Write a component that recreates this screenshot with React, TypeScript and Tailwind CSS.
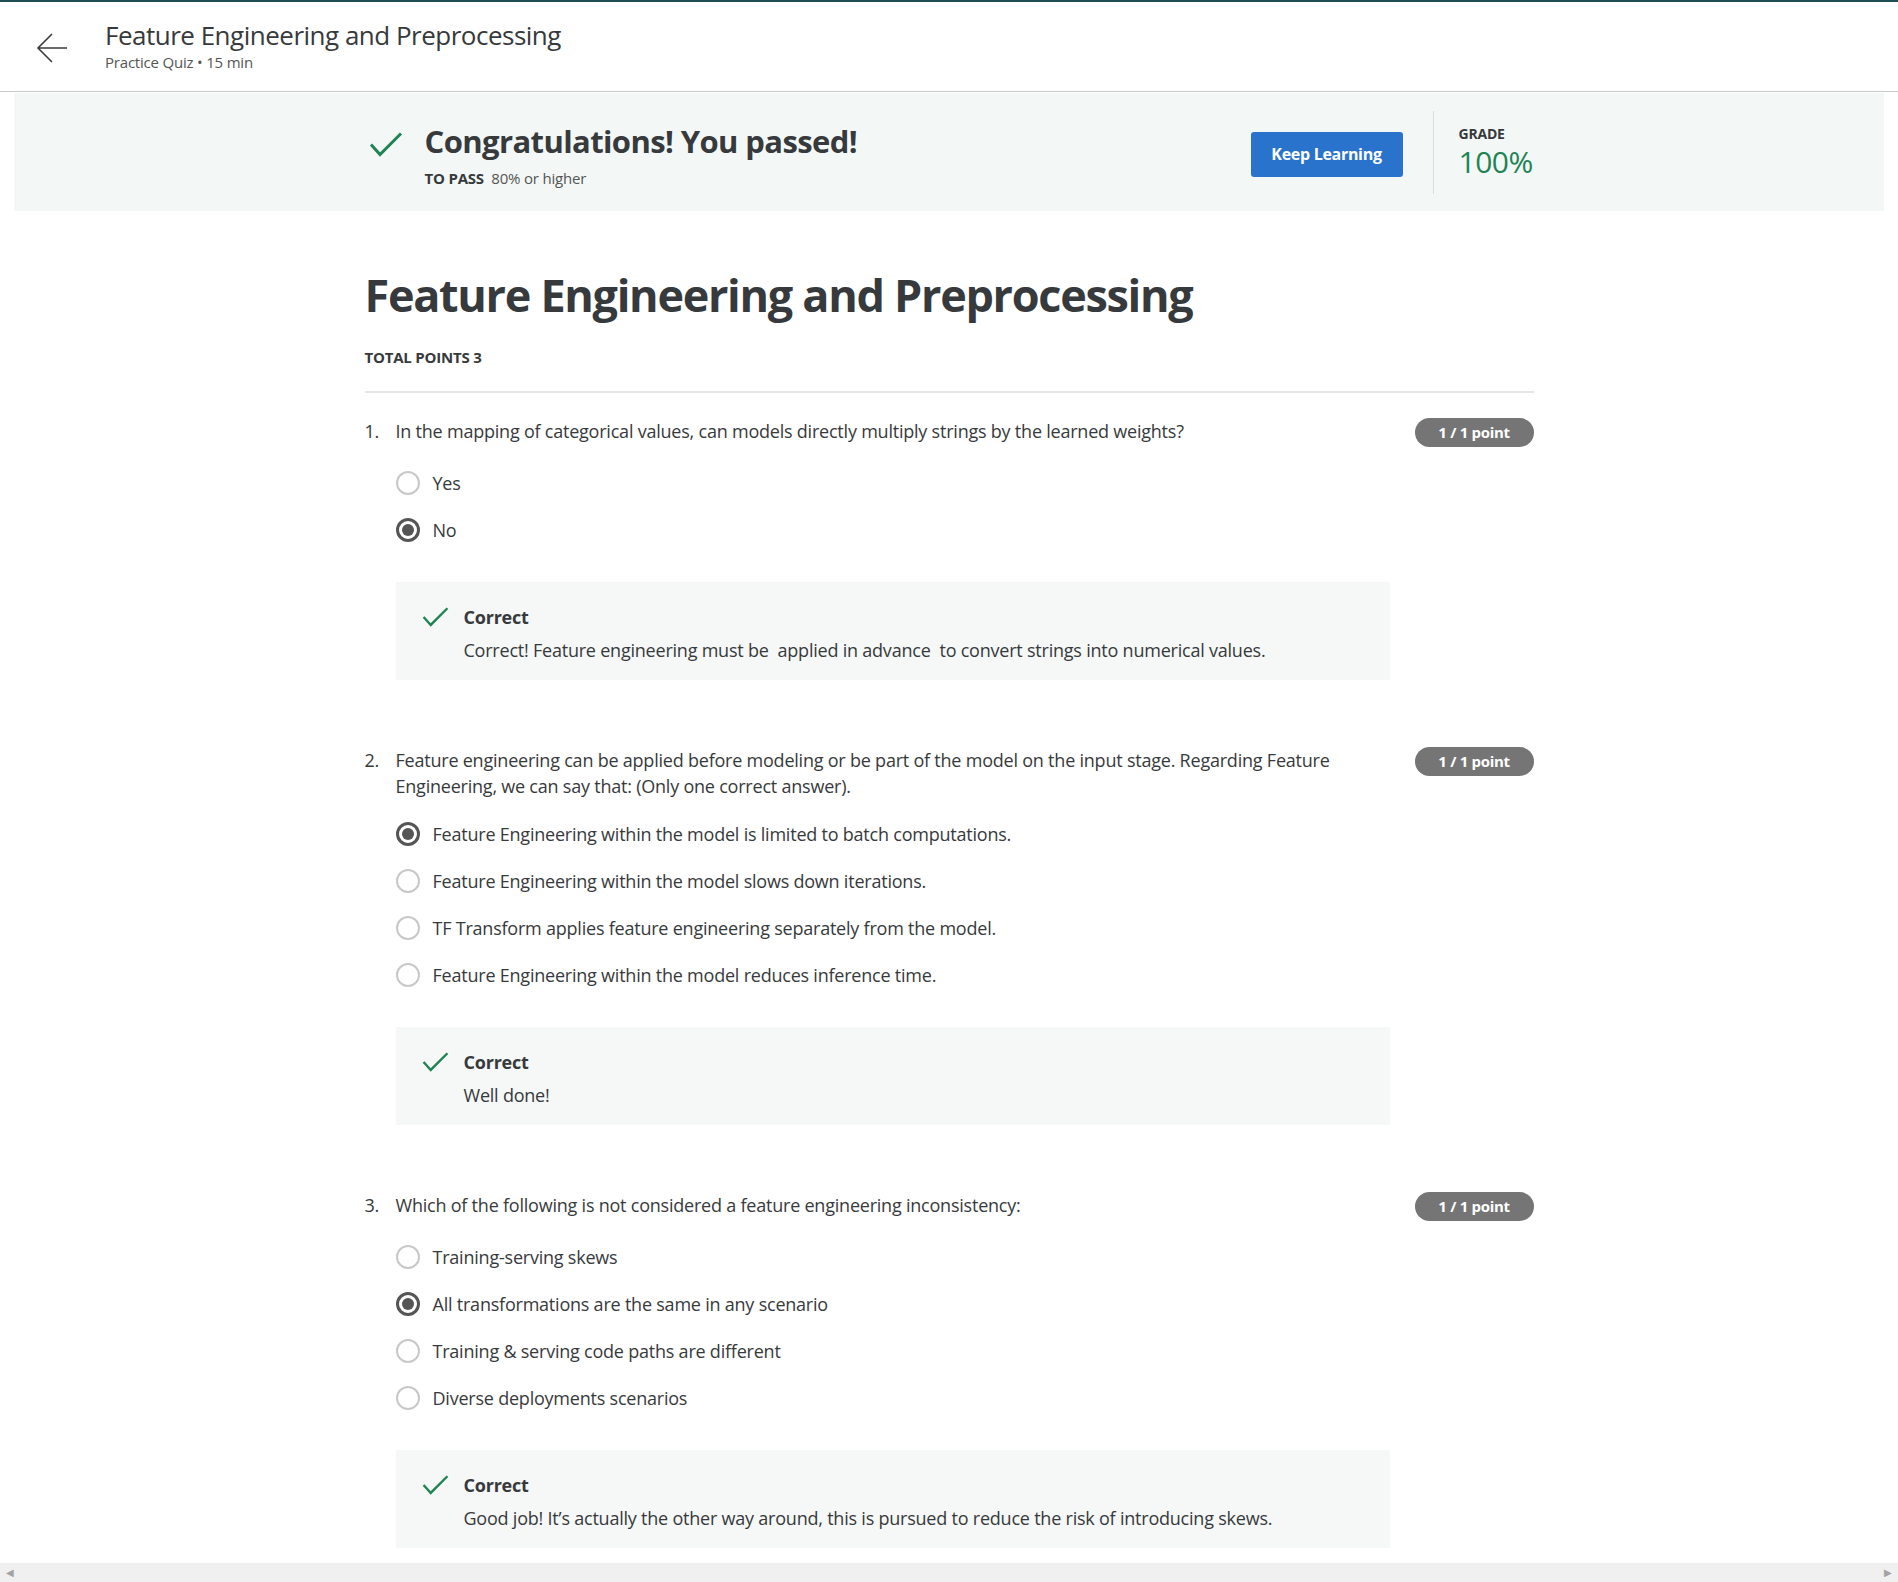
import type { ReactNode } from "react";

const font = { fontFamily: '"Open Sans", "Liberation Sans", sans-serif' };

type Question = {
  n: number;
  text: ReactNode;
  options: string[];
  picked: number;
  feedback: string;
};

const questions: Question[] = [
  {
    n: 1,
    text: "In the mapping of categorical values, can models directly multiply strings by the learned weights?",
    options: ["Yes", "No"],
    picked: 1,
    feedback: "Correct! Feature engineering must be  applied in advance  to convert strings into numerical values.",
  },
  {
    n: 2,
    text: "Feature engineering can be applied before modeling or be part of the model on the input stage. Regarding Feature Engineering, we can say that: (Only one correct answer).",
    options: [
      "Feature Engineering within the model is limited to batch computations.",
      "Feature Engineering within the model slows down iterations.",
      "TF Transform applies feature engineering separately from the model.",
      "Feature Engineering within the model reduces inference time.",
    ],
    picked: 0,
    feedback: "Well done!",
  },
  {
    n: 3,
    text: "Which of the following is not considered a feature engineering inconsistency:",
    options: [
      "Training-serving skews",
      "All transformations are the same in any scenario",
      "Training & serving code paths are different",
      "Diverse deployments scenarios",
    ],
    picked: 1,
    feedback: "Good job! It\u2019s actually the other way around, this is pursued to reduce the risk of introducing skews.",
  },
];

function Check({ className }: { className?: string }) {
  return (
    <svg viewBox="0 0 34 26" className={className} fill="none">
      <polyline points="2,13 11,23 32,2" stroke="#1f8354" strokeWidth="3" />
    </svg>
  );
}

function Radio({ on }: { on: boolean }) {
  if (on) {
    return (
      <span className="flex h-[24px] w-[24px] shrink-0 items-center justify-center rounded-full border-[3px] border-[#555]">
        <span className="h-[12px] w-[12px] rounded-full bg-[#555]" />
      </span>
    );
  }
  return <span className="h-[24px] w-[24px] shrink-0 rounded-full border-2 border-[#c8c8c8]" />;
}

function QuestionBlock({ q }: { q: Question }) {
  return (
    <div className="flex text-[18px] tracking-[-0.22px] text-[#373a3c]">
      <div className="w-[31px] shrink-0 leading-[26px]">{q.n}.</div>
      <div className="w-[994px] shrink-0">
        <p className="min-h-[30px] leading-[26px]">{q.text}</p>
        <div className="mt-[23px] flex flex-col gap-[23px]">
          {q.options.map((o, i) => (
            <label key={o} className="flex items-center gap-[13px] leading-[24px]">
              <Radio on={i === q.picked} />
              <span>{o}</span>
            </label>
          ))}
        </div>
        <div className="mt-[40px] flex h-[98px] gap-[15px] bg-[#f5f8f7] pl-[26px] pt-[24px]">
          <Check className="h-[22px] w-[27px] shrink-0" />
          <div>
            <div className="text-[18px] font-bold leading-[22px] text-[#373a3c]">Correct</div>
            <div className="mt-[10px] whitespace-pre-wrap leading-[24px]">{q.feedback}</div>
          </div>
        </div>
      </div>
      <div className="ml-auto">
        <span className="flex h-[29px] w-[119px] items-center justify-center rounded-full bg-[#757575] text-[15px] font-bold tracking-[-0.3px] text-white">
          1 / 1 point
        </span>
      </div>
    </div>
  );
}

export default function App() {
  return (
    <div className="min-h-screen bg-white pb-[19px]" style={font}>
      <div className="h-[2px] bg-[#1d4e55]" />
      <header className="flex h-[90px] items-center border-b border-[#c9c9c9]">
        <div className="flex w-[105px] justify-center pr-[2px]">
          <svg viewBox="0 0 34 34" className="mt-[3px] h-[34px] w-[34px]" fill="none" stroke="#3c3c3c" strokeWidth="1.6">
            <path d="M32 17H3M17 3L3 17l14 14" />
          </svg>
        </div>
        <div className="-mt-[2px]">
          <div className="text-[26px] leading-[32px] tracking-[-0.5px] text-[#373a3c]">Feature Engineering and Preprocessing</div>
          <div className="mt-[1px] text-[15px] leading-[20px] tracking-[-0.2px] text-[#555]">Practice Quiz &bull; 15 min</div>
        </div>
      </header>

      <section className="mx-[14px] mt-px flex h-[118px] justify-center bg-[#f3f8f6]">
        <div className="flex w-[1169px] items-center">
          <Check className="mb-[16px] ml-[4px] h-[27px] w-[34px] shrink-0" />
          <div className="ml-[22px] mt-[5px]">
            <div className="text-[31px] font-bold leading-[36px] tracking-[-0.6px] text-[#373a3c]">Congratulations! You passed!</div>
            <div className="mt-[10px] text-[15px] leading-[18px] tracking-[-0.2px] text-[#555]">
              <span className="font-bold text-[#373a3c]">TO PASS</span> &nbsp;80% or higher
            </div>
          </div>
          <button className="ml-auto mt-[4px] h-[45px] w-[152px] rounded-[3px] bg-[#2a73cc] text-[16px] font-bold tracking-[-0.3px] text-white">
            Keep Learning
          </button>
          <div className="ml-[30px] mr-[25px] h-[83px] w-px bg-[#dcdcdc]" />
          <div className="w-[75px]">
            <div className="text-[14px] font-bold leading-[18px] tracking-[-0.2px] text-[#373a3c]">GRADE</div>
            <div className="mt-[1px] text-[30px] leading-[36px] tracking-[-0.5px] text-[#1f8354]">100%</div>
          </div>
        </div>
      </section>

      <main className="mx-auto w-[1169px] pt-[56px]">
        <h1 className="text-[45px] font-bold leading-[56px] tracking-[-1.3px] text-[#373a3c]">
          Feature Engineering and Preprocessing
        </h1>
        <div className="mt-[23px] text-[15px] font-bold tracking-[-0.2px] text-[#373a3c]">TOTAL POINTS 3</div>
        <div className="mt-[22px] h-[2px] bg-[#e6e6e6]" />
        <div className="mt-[25px] flex flex-col gap-[67px]">
          {questions.map((q) => (
            <QuestionBlock key={q.n} q={q} />
          ))}
        </div>
      </main>

      <div className="fixed inset-x-0 bottom-0 flex h-[19px] items-center justify-between bg-[#f0f0f0] px-[6px] text-[10px] text-[#a3a3a3]">
        <span>&#9664;</span>
        <span>&#9654;</span>
      </div>
    </div>
  );
}
